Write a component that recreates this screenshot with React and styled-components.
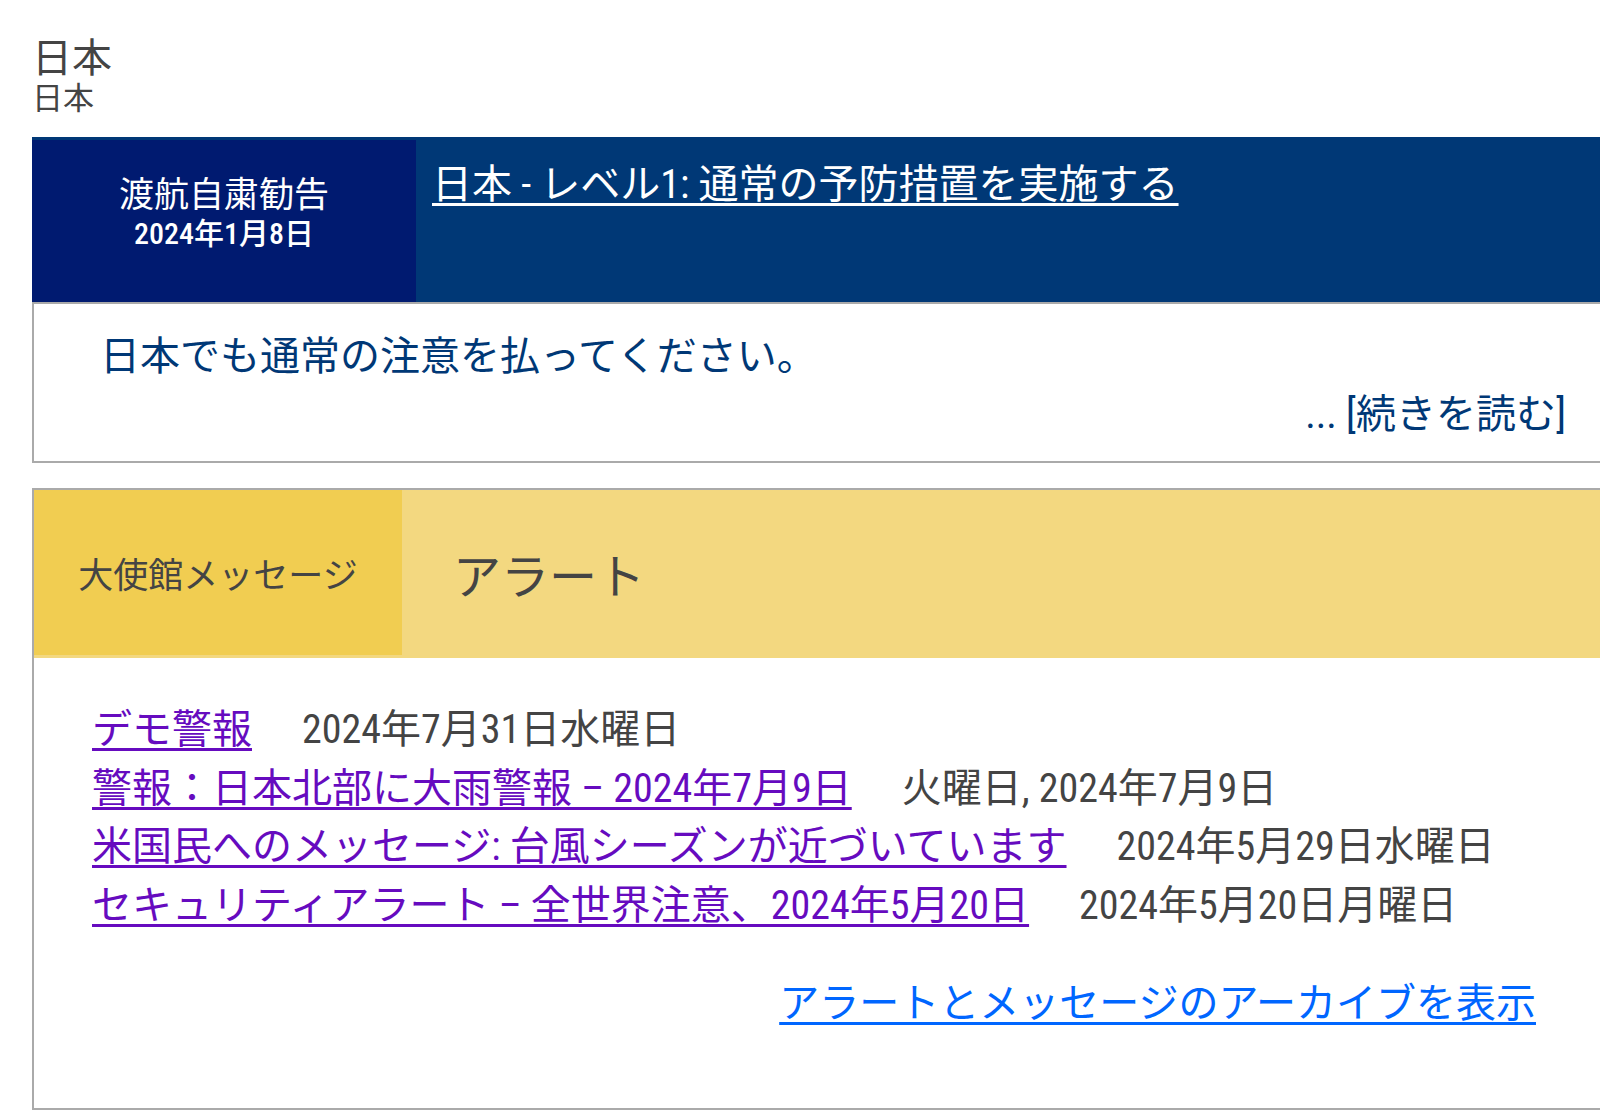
import React from 'react';
import styled, { createGlobalStyle } from 'styled-components';

const GlobalStyle = createGlobalStyle`
  html, body {
    margin: 0;
    padding: 0;
    background: #fff;
    overflow-x: hidden;
  }
  body {
    font-family: "Roboto Condensed", Roboto, "Noto Sans CJK JP", sans-serif;
    font-stretch: condensed;
    color: #444;
  }
`;

const Page = styled.div`
  width: 1604px;
  padding: 36px 0 0 32px;
`;

const Title = styled.h1`
  margin: 0;
  font-size: 40px;
  line-height: 45px;
  font-weight: 400;
  color: #444;
`;

const Subtitle = styled.div`
  font-size: 31px;
  line-height: 36px;
  color: #444;
`;

const Advisory = styled.section`
  margin-top: 20px;
`;

const AdvisoryHead = styled.div`
  display: flex;
  background: #003876;
  padding-top: 3px;
  min-height: 162px;
`;

const LevelCell = styled.div`
  width: 384px;
  flex: none;
  background: #001a70;
  color: #fff;
  text-align: center;
  padding-top: 35px;
  box-sizing: border-box;
`;

const LevelName = styled.div`
  font-size: 35px;
  line-height: 42px;
`;

const LevelDate = styled.div`
  font-size: 30px;
  line-height: 34px;
  font-weight: 500;
`;

const AdvisoryTitle = styled.div`
  flex: 1;
  padding: 16px 16px;
  font-size: 40px;
  line-height: 58px;
`;

const WhiteLink = styled.a`
  color: #fff;
  text-decoration: underline;
  text-underline-offset: 5px;
  text-decoration-thickness: 3px;
`;

const AdvisoryBody = styled.div`
  border: 2px solid #aaa;
  padding: 24px 68px 17px 66px;
  color: #003876;
  font-size: 40px;
  line-height: 58px;
`;

const ReadMore = styled.div`
  text-align: right;
`;

const NavyLink = styled.a`
  color: #003876;
  text-decoration: none;
`;

const Messages = styled.section`
  margin-top: 25px;
  border: 2px solid #aaa;
`;

const MessagesHead = styled.div`
  display: flex;
  background: #f3d880;
  padding-bottom: 3px;
`;

const KindCell = styled.div`
  width: 368px;
  height: 165px;
  flex: none;
  background: #f1cd51;
  display: flex;
  align-items: center;
  justify-content: center;
  font-size: 35px;
  color: #444;
`;

const HeadTitle = styled.div`
  display: flex;
  align-items: center;
  padding-left: 51px;
  font-size: 48px;
  color: #444;
`;

const MessagesBody = styled.div`
  padding: 43px 98px 74px 58px;
`;

const AlertList = styled.ul`
  list-style: none;
  margin: 0;
  padding: 0;
`;

const AlertRow = styled.li`
  font-size: 40px;
  line-height: 58.5px;
`;

const AlertLink = styled.a`
  color: #660bbf;
  text-decoration: underline;
  text-underline-offset: 5px;
  text-decoration-thickness: 3px;
`;

const AlertDate = styled.span`
  margin-left: 50px;
  color: #444;
`;

const Archive = styled.div`
  margin-top: 40px;
  text-align: right;
  font-size: 40px;
  line-height: 58.5px;
`;

const ArchiveLink = styled.a`
  color: #0066ff;
  text-decoration: underline;
  text-underline-offset: 5px;
  text-decoration-thickness: 3px;
`;

const alerts = [
  { title: 'デモ警報', date: '2024年7月31日水曜日' },
  { title: '警報：日本北部に大雨警報 – 2024年7月9日', date: '火曜日, 2024年7月9日' },
  { title: '米国民へのメッセージ: 台風シーズンが近づいています', date: '2024年5月29日水曜日' },
  { title: 'セキュリティアラート – 全世界注意、2024年5月20日', date: '2024年5月20日月曜日' },
];

export default function App() {
  return (
    <>
      <GlobalStyle />
      <Page>
        <Title>日本</Title>
        <Subtitle>日本</Subtitle>

        <Advisory>
          <AdvisoryHead>
            <LevelCell>
              <LevelName>渡航自粛勧告</LevelName>
              <LevelDate>2024年1月8日</LevelDate>
            </LevelCell>
            <AdvisoryTitle>
              <WhiteLink href="#">日本 - レベル1: 通常の予防措置を実施する</WhiteLink>
            </AdvisoryTitle>
          </AdvisoryHead>
          <AdvisoryBody>
            日本でも通常の注意を払ってください。
            <ReadMore>
              <NavyLink href="#">... [続きを読む]</NavyLink>
            </ReadMore>
          </AdvisoryBody>
        </Advisory>

        <Messages>
          <MessagesHead>
            <KindCell>大使館メッセージ</KindCell>
            <HeadTitle>アラート</HeadTitle>
          </MessagesHead>
          <MessagesBody>
            <AlertList>
              {alerts.map((a) => (
                <AlertRow key={a.title}>
                  <AlertLink href="#">{a.title}</AlertLink>
                  <AlertDate>{a.date}</AlertDate>
                </AlertRow>
              ))}
            </AlertList>
            <Archive>
              <ArchiveLink href="#">アラートとメッセージのアーカイブを表示</ArchiveLink>
            </Archive>
          </MessagesBody>
        </Messages>
      </Page>
    </>
  );
}
